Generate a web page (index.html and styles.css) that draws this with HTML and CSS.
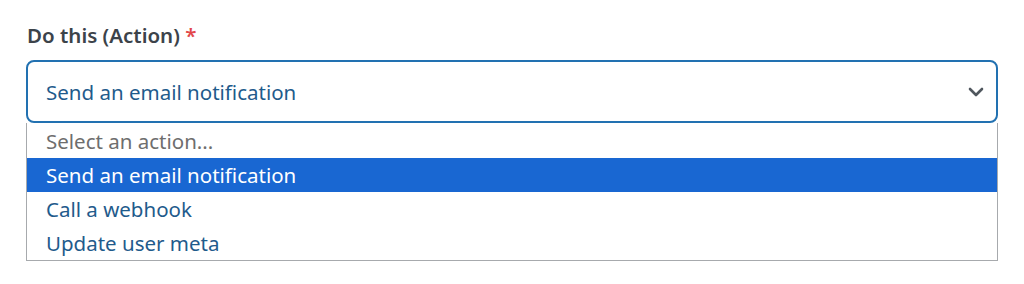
FILE: index.html
```html
<!DOCTYPE html>
<html>
<head>
<meta charset="utf-8">
<link rel="stylesheet" href="styles.css">
</head>
<body>
<div class="field">
  <label class="label">Do this (Action) <span class="req">*</span></label>
  <div class="select">
    <span class="value">Send an email notification</span>
    <svg class="chev" width="16" height="10" viewBox="0 0 16 10"><path d="M2 2 L8 8 L14 2" fill="none" stroke="#50575e" stroke-width="2.6" stroke-linecap="round" stroke-linejoin="round"/></svg>
  </div>
  <ul class="options">
    <li class="opt placeholder">Select an action...</li>
    <li class="opt active">Send an email notification</li>
    <li class="opt">Call a webhook</li>
    <li class="opt">Update user meta</li>
  </ul>
</div>
</body>
</html>
```

FILE: styles.css
```css
html, body {
  margin: 0;
  padding: 0;
  background: #fff;
}
body {
  font-family: "Noto Sans", "Open Sans", "Liberation Sans", sans-serif;
}
.field {
  padding: 23px 26px 0 26px;
  width: 972px;
}
.label {
  display: block;
  font-size: 20.5px;
  font-weight: 600;
  color: #3c434a;
  line-height: 24px;
  margin-left: 1px;
  margin-bottom: 13px;
}
.req {
  color: #e2474a;
}
.select {
  box-sizing: border-box;
  height: 63px;
  border: 2px solid #2271b1;
  border-radius: 8px;
  display: flex;
  align-items: center;
  justify-content: space-between;
  padding: 1px 12px 0 18px;
}
.value {
  font-size: 20.5px;
  color: #1f5b8c;
}
.chev {
  display: block;
}
.options {
  list-style: none;
  margin: 0;
  padding: 0;
  border: 1px solid #a7aaad;
  border-top: none;
}
.opt {
  height: 34px;
  line-height: 34px;
  padding-left: 19px;
  font-size: 20.5px;
  color: #1f5b8c;
}
.opt.placeholder {
  height: 35px;
  line-height: 37px;
  color: #6e6e6e;
}
.opt.active {
  background: #1967d2;
  color: #fff;
}
```
